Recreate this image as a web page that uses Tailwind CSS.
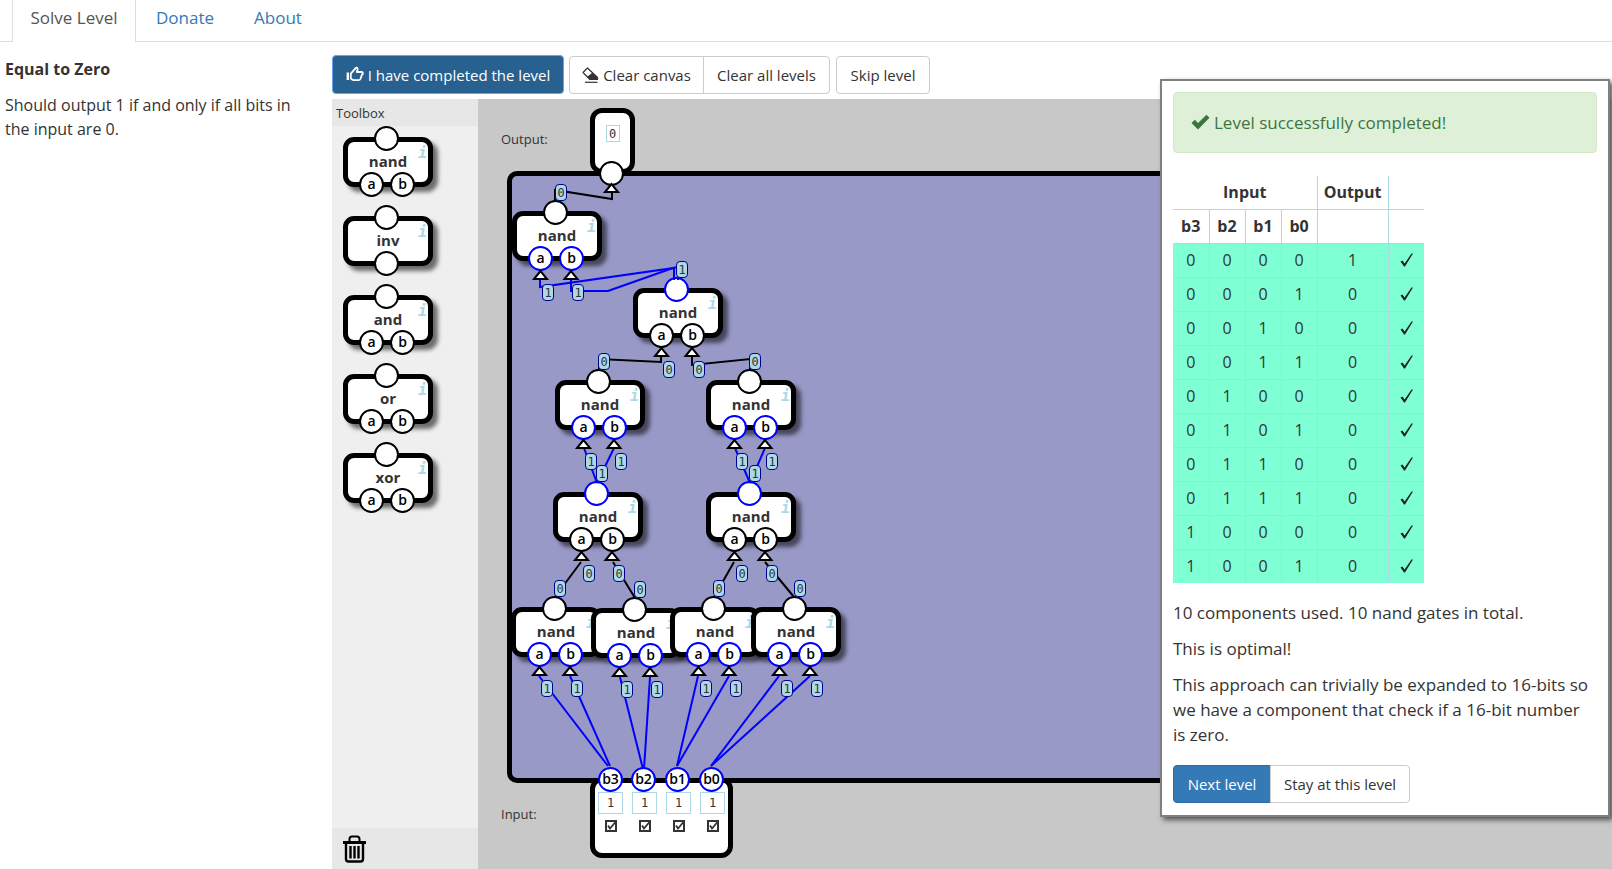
<!DOCTYPE html>
<html lang="en">
<head>
<meta charset="utf-8">
<title>Solve Level</title>
<script src="https://cdn.jsdelivr.net/npm/@tailwindcss/browser@4"></script>
</head>
<body class="h-screen overflow-hidden bg-white font-['Open_Sans',sans-serif] text-base leading-[25px] text-[#333]">
<div class="flex h-full flex-col">
  <nav class="flex h-[42px] shrink-0 items-stretch text-[17px] text-[#337ab7]">
    <div class="w-3 border-b border-[#ddd]"></div>
    <a href="#solve" class="flex w-[124px] items-start justify-center border-x border-[#ddd] pt-[5px] text-[#555]">Solve Level</a>
    <div class="flex grow items-start gap-10 border-b border-[#ddd] pt-[5px] pl-5">
      <a href="#donate">Donate</a>
      <a href="#about">About</a>
    </div>
  </nav>
  <div class="flex min-h-0 grow">
    <aside class="flex w-[332px] shrink-0 flex-col gap-3 pt-[15px] pr-6 pl-[5px] leading-6">
      <h1 class="font-bold">Equal to Zero</h1>
      <p>Should output 1 if and only if all bits in the input are 0.</p>
    </aside>
    <main class="flex min-w-0 grow flex-col">
      <div class="flex h-[57px] shrink-0 items-center gap-[5px] pt-[11px] pb-[3px] text-[15px]">
        <button class="flex h-[39px] w-[232px] items-center justify-center gap-1 rounded-[4px] border border-[#6aa3f0] bg-[#286090] pt-px text-white">
          <svg class="size-[18px]" viewBox="0 0 18 18" fill="none" stroke="currentColor" stroke-width="1.8" stroke-linejoin="round"><path d="M1.8 6.500v7.500" stroke-width="2.4"/><path d="M4.8 13V7.700L9.200 2.600C9.800 1 12 1.500 11.600 3.600L10.800 6H15.500C17.400 6.200 17.200 8.200 16 8.500L14.400 13C14 14 13.400 14.200 12.600 14.200H7.600L4.800 13"/></svg>
          I have completed the level</button>
        <div class="flex">
          <button class="flex h-[38px] w-[135px] items-center justify-center gap-1 rounded-l-[4px] border border-[#ccc] pt-px">
            <svg class="size-[17px]" viewBox="0 0 17 17"><path d="M1 5.500 5.500 1 15.500 10.500V12.500H8Z" fill="none" stroke="#333" stroke-width="1.2" stroke-linejoin="round"/><path d="M10.500 5.500 16 10.500V13H8L5 10Z" fill="#333"/><path d="M3 15.300h12.500" stroke="#333" stroke-width="1.2"/></svg>
            Clear canvas</button>
          <button class="-ml-px h-[38px] w-[127px] rounded-r-[4px] border border-[#ccc] pt-px">Clear all levels</button>
        </div>
        <button class="ml-px h-[38px] w-[94px] rounded-[4px] border border-[#ccc] pt-px">Skip level</button>
      </div>
      <div class="flex min-h-0 grow">
        <section class="flex w-[146px] shrink-0 flex-col bg-[#efefef]">
          <h2 class="h-[27px] bg-[#e7e7e7] px-1 pt-[2px] text-[13px]">Toolbox</h2>
          <div id="tools" class="flex grow flex-col gap-[29px] pt-[11px] pl-[11px]"></div>
          <div class="flex h-[41px] items-center bg-[#e7e7e7] pl-[11px]">
            <button aria-label="Trash"><svg class="h-7 w-[23px]" viewBox="0 0 23 28" fill="none" stroke="#000"><path d="M6.5 6.500V4Q6.500 1.500 9 1.500H14Q16.500 1.500 16.500 4V6.500" stroke-width="2"/><path d="M0 7.500H23" stroke-width="3"/><path d="M3 9V24Q3 26.500 5.500 26.500H17.500Q20 26.500 20 24V9" stroke-width="2.400"/><path d="M7.500 11V23.500M11.500 11V23.500M15.500 11V23.500" stroke-width="2.400"/></svg></button>
          </div>
        </section>
        <section id="canvas" class="relative grow overflow-hidden bg-[#c8c8c8]">
          <div class="absolute top-[28px] left-[23px] text-[13px]">Output:</div>
          <div class="absolute top-[703px] left-[23px] text-[13px]">Input:</div>
          <div class="absolute top-[9px] left-[112px] flex h-[66px] w-[45px] justify-center rounded-[12px] border-[5px] border-black bg-white pt-3"><output class="flex h-[17px] w-[14px] items-center justify-center border border-[#add8e6] font-['DejaVu_Sans_Mono',monospace] text-xs">0</output></div>
          <div class="absolute top-[678px] left-[112px] flex h-[81px] w-[143px] justify-center gap-[9px] rounded-[12px] border-[5px] border-black bg-white pt-[10px]" id="inputs"></div>
          <div class="absolute top-[72px] right-6 left-[29px] h-[612px] rounded-[10px] border-[5px] border-black bg-[#9999c8]"></div>
          <div id="nodes"></div>
          <svg id="wires" class="pointer-events-none absolute inset-0 size-full"></svg>
          <div id="labels"></div>
        </section>
      </div>
    </main>
  </div>
</div>

<div role="dialog" aria-label="Level completed" class="absolute top-[79px] right-[2px] w-[450px] border-2 border-[#808080] bg-white p-[11px] pb-3 text-[17px] shadow-[3px_3px_5px_#555]">
  <div class="flex h-[61px] items-center gap-1 rounded-[4px] border border-[#d6e9c6] bg-[#dff0d8] pl-[17px] text-[#3c763d]">
    <svg class="h-[17px] w-[19px]" viewBox="0 0 19 17"><path d="M0.500 9 3.800 5.800 7 9 15.500 0.800 18.500 3.800 7 15.500Z" fill="#3c763d"/></svg>
    Level successfully completed!
  </div>
  <table class="mt-[23px] w-[251px] table-fixed border-collapse text-center text-base">
    <colgroup><col class="w-9"><col class="w-9"><col class="w-9"><col class="w-9"><col class="w-[71px]"><col class="w-9"></colgroup>
    <thead>
      <tr class="h-[33px]"><th colspan="4" class="border-r border-b border-[#add8e6] p-0">Input</th><th class="border-r border-b border-[#add8e6] p-0">Output</th><th class="border-b border-[#add8e6] p-0"></th></tr>
      <tr class="h-[34px]"><th class="border-r border-[#add8e6] p-0">b3</th><th class="border-r border-[#add8e6] p-0">b2</th><th class="border-r border-[#add8e6] p-0">b1</th><th class="border-r border-[#add8e6] p-0">b0</th><th class="border-r border-[#add8e6] p-0"></th><th></th></tr>
    </thead>
    <tbody id="rows" class="bg-[#7fffd4]"></tbody>
  </table>
  <div class="mt-[17px] flex flex-col gap-[11px] pr-2">
    <p>10 components used. 10 nand gates in total.</p>
    <p>This is optimal!</p>
    <p>This approach can trivially be expanded to 16-bits so we have a component that check if a 16-bit number is zero.</p>
  </div>
  <div class="mt-[18px] flex text-[15px]">
    <button class="h-[38px] w-[98px] rounded-l-[4px] border border-[#2e6da4] bg-[#337ab7] text-white">Next level</button>
    <button class="-ml-px h-[38px] w-[140px] rounded-r-[4px] border border-[#ccc]">Stay at this level</button>
  </div>
</div>

<script>
const BLACK = 'border-black', BLUE = 'border-[#0000ff]';
const pin = (x, y, text, on) => `<div class="absolute flex size-[25px] items-center justify-center rounded-full border-2 bg-white pb-[2px] text-sm font-semibold text-black ${on ? BLUE : BLACK}" style="left:${x - 13}px;top:${y - 12}px">${text}</div>`;
const body = (name, inOn, outOn) => `
  <div class="flex size-full items-center justify-center rounded-[11px] border-[5px] border-black bg-white pb-[2px] text-[15px] font-bold shadow-[5px_5px_4px_rgba(0,0,0,0.55)]">${name}</div>
  <a href="#info" aria-label="About ${name}" class="absolute top-1 right-[6px] font-['DejaVu_Sans_Mono',monospace] text-[15px] font-bold italic text-[#add8e6]">i</a>
  ${pin(44, 1, '', outOn)}` + (name === 'inv' ? pin(44, 47, '', inOn) : pin(29, 47, 'a', inOn) + pin(60, 47, 'b', inOn));

document.getElementById('tools').innerHTML = ['nand', 'inv', 'and', 'or', 'xor']
  .map(n => `<div class="relative h-[50px] w-[90px]">${body(n)}</div>`).join('');

// x, y, input level, output level
const gates = [[34,112,1,0],[155,189,0,1],[77,281,1,0],[228,281,1,0],[75,393,0,1],[228,393,0,1],[33,508,1,0],[113,509,1,0],[192,508,1,0],[273,508,1,0]];
const inputs = [['b3',133],['b2',166],['b1',200],['b0',234]];
document.getElementById('nodes').innerHTML = gates
  .map(([x, y, i, o]) => `<div class="absolute h-[50px] w-[90px]" style="left:${x}px;top:${y}px">${body('nand', i, o)}</div>`).join('')
  + pin(134, 74, '', 0) + inputs.map(([n, x]) => pin(x, 680, n, 1)).join('');

document.getElementById('inputs').innerHTML = inputs.map(([n]) => `
  <label class="flex w-[25px] flex-col items-center gap-[6px]">
    <span class="flex h-[22px] w-[25px] items-center justify-center border border-[#add8e6] font-['DejaVu_Sans_Mono',monospace] text-xs">1</span>
    <span class="relative block size-3"><input type="checkbox" checked aria-label="${n}" class="block size-3 appearance-none border-2 border-[#333]"><svg class="absolute inset-0 size-3" viewBox="0 0 12 12"><path d="M3 5.500 5 8.500 10.500 2" fill="none" stroke="#333" stroke-width="1.800"/></svg></span>
  </label>`).join('');

const wires = [
  [0,'77,103 77,91 134,100 134,94'],
  [1,'62,181 62,188 196,169 196,181'],[1,'93,181 93,192 130,192 195,169 200,168 200,181'],
  [0,'121,271 121,260 183,263 183,253'],[0,'272,271 272,260 214,266 214,253'],
  [1,'106,349 119,384'],[1,'136,349 119,384'],[1,'257,349 272,384'],[1,'287,349 272,384'],
  [0,'103,463 77,498'],[0,'135,463 157,499'],[0,'256,463 236,498'],[0,'287,463 316,498'],
  [1,'61,577 130,667'],[1,'92,577 132,667'],[1,'142,578 165,670'],[1,'172,578 166,670'],
  [1,'220,577 199,667'],[1,'251,577 199,667'],[1,'301,577 233,667'],[1,'332,577 233,667']];
const tri = (x, y) => `<path d="M${x} ${y + 12}l-6.500 8h13z" fill="#fff" stroke="#000" stroke-width="2"/>`;
document.getElementById('wires').innerHTML =
  wires.map(([on, p]) => `<polyline points="${p}" fill="none" stroke="${on ? '#0000ff' : '#000'}" stroke-width="2"/>`).join('')
  + gates.map(([x, y]) => tri(x + 28.5, y + 48) + tri(x + 59, y + 48)).join('') + tri(133.5, 73);

const tag = (x, y, v) => `<div class="absolute flex h-[17px] w-3 items-center justify-center rounded-[4px] border border-[#00008b] bg-[#add8e6] font-['DejaVu_Sans_Mono',monospace] text-xs" style="left:${x}px;top:${y}px">${v}</div>`;
document.getElementById('labels').innerHTML = gates
  .map(([x, y, i, o]) => tag(x + 43, y - 27, o) + tag(x + 30, y + 73, i) + tag(x + 60, y + 73, i)).join('');

document.getElementById('rows').innerHTML = ['00001','00010','00100','00110','01000','01010','01100','01110','10000','10010']
  .map(r => `<tr class="h-[34px]">${[...r].map(v => `<td class="border-t border-r border-[#add8e6] p-0">${v}</td>`).join('')}<td class="border-t border-[#add8e6] p-0"><svg class="mx-auto h-[14px] w-[13px]" viewBox="0 0 13 14" aria-label="correct"><path d="M0.500 8.500 2.500 7.500 4.600 10.500 11.500 0.500H13L5 13.500H4Z" fill="#222"/></svg></td></tr>`).join('');
</script>
</body>
</html>
